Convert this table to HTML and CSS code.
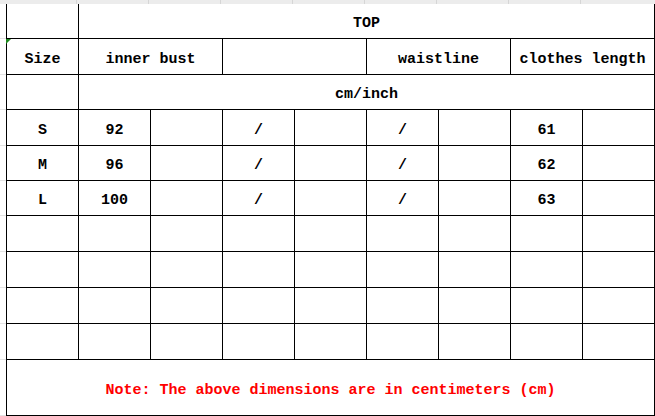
FILE: index.html
```html
<!DOCTYPE html>
<html>
<head>
<meta charset="utf-8">
<link rel="stylesheet" href="styles.css">
</head>
<body>
<div class="band">
  <div class="band-seg first"></div>
  <div class="band-seg"></div><div class="band-seg"></div><div class="band-seg"></div>
  <div class="band-seg"></div><div class="band-seg"></div><div class="band-seg"></div>
  <div class="band-seg"></div><div class="band-seg"></div><div class="band-seg last"></div>
</div>
<div class="sheet">
  <div class="gutter">
    <div class="g r34"></div><div class="g r35"></div><div class="g r34"></div>
    <div class="g r35"></div><div class="g r34"></div><div class="g r34"></div>
    <div class="g r35"></div><div class="g r35"></div><div class="g r35"></div>
    <div class="g r35"></div><div class="g r55"></div>
  </div>
  <div class="grid">
    <div class="c"></div>
    <div class="c span8">TOP</div>

    <div class="c flag">Size</div>
    <div class="c span2">inner bust</div>
    <div class="c span2"></div>
    <div class="c span2">waistline</div>
    <div class="c span2">clothes length</div>

    <div class="c"></div>
    <div class="c span8">cm/inch</div>

    <div class="c">S</div><div class="c">92</div><div class="c"></div><div class="c">/</div><div class="c"></div><div class="c">/</div><div class="c"></div><div class="c">61</div><div class="c"></div>
    <div class="c">M</div><div class="c">96</div><div class="c"></div><div class="c">/</div><div class="c"></div><div class="c">/</div><div class="c"></div><div class="c">62</div><div class="c"></div>
    <div class="c">L</div><div class="c">100</div><div class="c"></div><div class="c">/</div><div class="c"></div><div class="c">/</div><div class="c"></div><div class="c">63</div><div class="c"></div>

    <div class="c"></div><div class="c"></div><div class="c"></div><div class="c"></div><div class="c"></div><div class="c"></div><div class="c"></div><div class="c"></div><div class="c"></div>
    <div class="c"></div><div class="c"></div><div class="c"></div><div class="c"></div><div class="c"></div><div class="c"></div><div class="c"></div><div class="c"></div><div class="c"></div>
    <div class="c"></div><div class="c"></div><div class="c"></div><div class="c"></div><div class="c"></div><div class="c"></div><div class="c"></div><div class="c"></div><div class="c"></div>
    <div class="c"></div><div class="c"></div><div class="c"></div><div class="c"></div><div class="c"></div><div class="c"></div><div class="c"></div><div class="c"></div><div class="c"></div>

    <div class="c span9 note">Note: The above dimensions are in centimeters (cm)</div>
  </div>
</div>
</body>
</html>
```
FILE: styles.css
```css
html, body {
  margin: 0;
  padding: 0;
  background: #fff;
}
body {
  width: 655px;
  height: 416px;
  overflow: hidden;
  font-family: "Liberation Mono", "DejaVu Sans Mono", monospace;
  font-size: 15px;
  font-weight: bold;
  color: #000;
}
.band {
  display: flex;
  height: 4px;
  background: #ececec;
}
.band-seg {
  width: 71px;
  border-right: 1px solid #d6d6d6;
  flex: none;
}
.band-seg.first {
  width: 5px;
  border-right: none;
}
.band-seg.last {
  width: 72px;
  border-right: none;
}
.sheet {
  display: flex;
}
.gutter {
  width: 6px;
  flex: none;
  display: flex;
  flex-direction: column;
}
.g {
  border-bottom: 1px solid #e2e2e2;
  flex: none;
}
.r34 { height: 34px; }
.r35 { height: 35px; }
.r55 { height: 55px; }
.grid {
  display: grid;
  grid-template-columns: repeat(9, 71px);
  grid-template-rows: 34px 35px 34px 35px 34px 34px 35px 35px 35px 35px 55px;
  gap: 1px;
  background: #000;
  border: 1px solid #000;
  border-top: none;
}
.c {
  background: #fff;
  display: flex;
  align-items: center;
  justify-content: center;
  white-space: nowrap;
  position: relative;
  padding-top: 5px;
}
.span2 { grid-column: span 2; }
.span8 { grid-column: span 8; }
.span9 { grid-column: span 9; }
.note {
  color: #ff0000;
}
.flag::before {
  content: "";
  position: absolute;
  left: -1px;
  top: 0;
  width: 0;
  height: 0;
  border-top: 5px solid #1e8a1e;
  border-right: 5px solid transparent;
}
```
